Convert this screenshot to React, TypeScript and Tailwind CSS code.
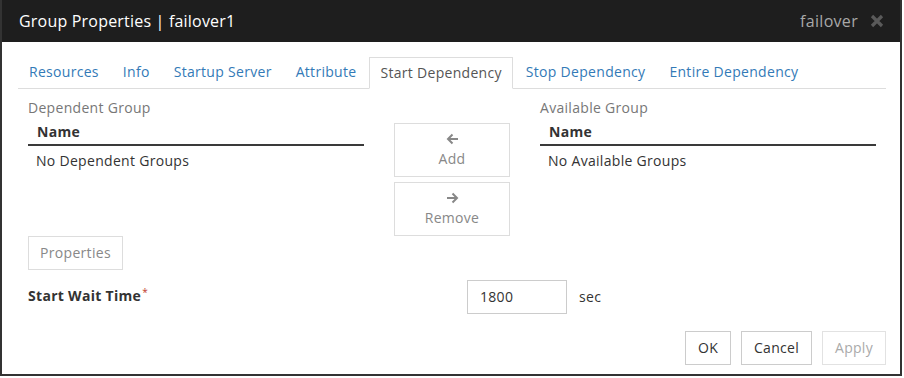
const tabs = [
  "Resources",
  "Info",
  "Startup Server",
  "Attribute",
  "Start Dependency",
  "Stop Dependency",
  "Entire Dependency",
];

const ACTIVE = "Start Dependency";

const GroupTable = (props: { label: string; empty: string; width: string }) => {
  const { label, empty, width } = props;
  return (
    <div className={width}>
      <div className="h-[20px] leading-[20px] text-[#777]">{label}</div>
      <div className="mt-[2px] h-[26px] leading-[23px] pl-[9px] font-bold text-[#333] border-b-2 border-[#3a3a3a]">
        Name
      </div>
      <div className="h-[28px] leading-[29px] pl-[8px] text-[#333]">{empty}</div>
    </div>
  );
};

const MoveButton = (props: { dir: "left" | "right"; label: string }) => {
  const { dir, label } = props;
  return (
    <button className="w-[116px] h-[54px] border border-[#ddd] bg-white flex flex-col items-center justify-center text-[#888] leading-[18px]">
      <svg width="13" height="12" viewBox="0 0 13 12" className="mb-[5px] mt-[1px]">
        {dir === "left" ? (
          <path
            d="M12 6H2M6.5 1.5L2 6l4.5 4.5"
            stroke="#888"
            strokeWidth="2"
            fill="none"
          />
        ) : (
          <path
            d="M1 6h10M6.5 1.5L11 6l-4.5 4.5"
            stroke="#888"
            strokeWidth="2"
            fill="none"
          />
        )}
      </svg>
      <span>{label}</span>
    </button>
  );
};

export default function App() {
  return (
    <div
      className="w-[904px] h-[378px] bg-white text-[14px] tracking-[0.3px] text-[#333]"
      style={{ fontFamily: '"Open Sans", "Noto Sans", sans-serif' }}
    >
      <div className="w-[902px] h-[376px] border-2 border-t-0 border-[#333] flex flex-col">
        {/* header */}
        <div className="h-[42px] bg-[#1e1e1e] flex items-center justify-between pl-[17px] pr-[16px]">
          <span className="text-white text-[16px] tracking-[0.2px]">Group Properties | failover1</span>
          <div className="flex items-center gap-[12px]">
            <span className="text-[#a8a8a8] text-[16px]">failover</span>
            <svg width="14" height="14" viewBox="0 0 14 14">
              <path d="M2 2l10 10M12 2L2 12" stroke="#5a5a5a" strokeWidth="3.2" />
            </svg>
          </div>
        </div>

        <div className="pl-[16px] pr-[14px] flex flex-col">
          {/* tabs */}
          <div className="mt-[15px] h-[32px] flex border-b border-[#ddd]">
            {tabs.map((t) =>
              t === ACTIVE ? (
                <div
                  key={t}
                  className="h-[32px] px-[10px] mr-[2px] leading-[29px] text-[#555] bg-white border border-[#ddd] border-b-white"
                >
                  {t}
                </div>
              ) : (
                <div
                  key={t}
                  className="h-[31px] px-[11px] mr-[2px] leading-[29px] text-[#337ab7]"
                >
                  {t}
                </div>
              )
            )}
          </div>

          <div className="px-[10px]">
            {/* dependency lists */}
            <div className="mt-[9px] flex gap-[30px]">
              <GroupTable label="Dependent Group" empty="No Dependent Groups" width="w-[336px]" />
              <div className="mt-[25px] flex flex-col gap-[5px]">
                <MoveButton dir="left" label="Add" />
                <MoveButton dir="right" label="Remove" />
              </div>
              <GroupTable label="Available Group" empty="No Available Groups" width="w-[336px]" />
            </div>

            <button className="mt-0 w-[95px] h-[34px] border border-[#ddd] bg-white text-[#888] leading-[30px]">
              Properties
            </button>

            <div className="mt-[10px] flex items-center">
              <div className="w-[439px] font-bold text-[#333] leading-[20px] -mt-[2px]">
                Start Wait Time<sup className="text-[#c0392b] font-normal text-[10px] ml-[1px]">*</sup>
              </div>
              <div className="w-[100px] h-[34px] border border-[#ccc] pl-[12px] leading-[31px]">
                1800
              </div>
              <span className="ml-[12px] -mt-[2px]">sec</span>
            </div>
          </div>

          {/* footer */}
          <div className="mt-[17px] flex justify-end gap-[10px]">
            <button className="w-[46px] h-[34px] border border-[#ccc] bg-white text-[#333] leading-[30px]">OK</button>
            <button className="w-[71px] h-[34px] border border-[#ccc] bg-white text-[#333] leading-[30px]">Cancel</button>
            <button className="w-[64px] h-[34px] border border-[#e2e2e2] bg-white text-[#aaa] leading-[30px]">Apply</button>
          </div>
        </div>
      </div>
    </div>
  );
}
